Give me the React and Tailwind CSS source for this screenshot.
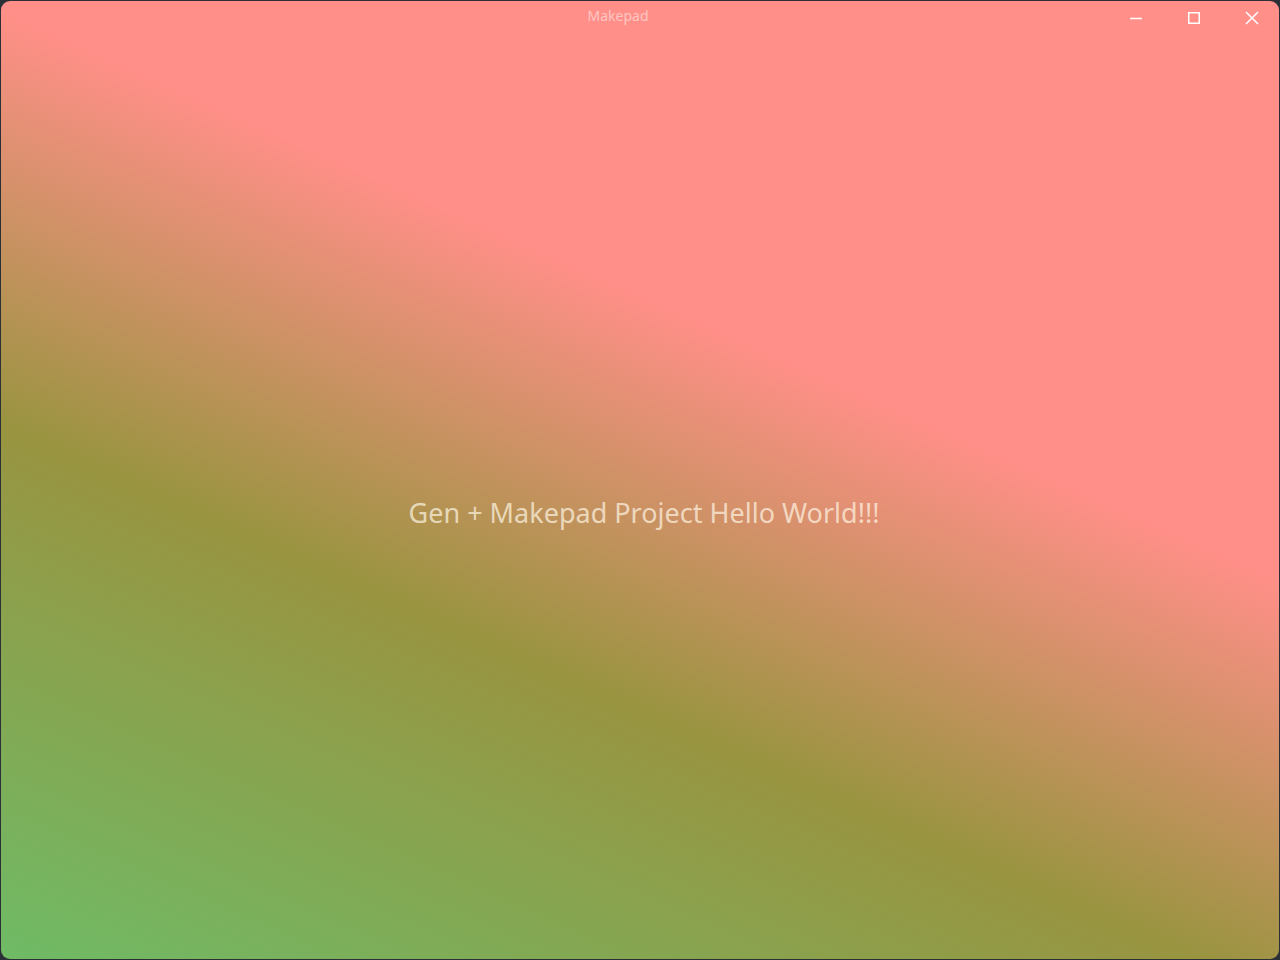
import React from 'react';

const WindowButton = ({ children }) => (
    <div className="w-[58px] h-[34px] flex items-center justify-center">
        <svg width="14" height="14" viewBox="0 0 14 14" fill="none" stroke="white" strokeWidth="1.5">
            {children}
        </svg>
    </div>
);

const App = () => {
    return (
        <div className="w-[1280px] h-[960px] bg-[#2b2f36] p-px" style={{ fontFamily: '"Noto Sans", "Open Sans", sans-serif' }}>
            <div className="w-full h-full rounded-[9px] overflow-hidden flex flex-col bg-[linear-gradient(24deg,#6fbb66_0%,#999440_35%,#ff8f88_62%,#ff8f88_100%)]">
                {/* Title bar */}
                <div className="h-9 flex items-start">
                    <div className="flex-1 pl-[128px] pt-[4px] text-center text-[14px] text-white/50">Makepad</div>
                    <div className="flex -mr-[2px]">
                        <WindowButton>
                            <path d="M1 7.5 H13" />
                        </WindowButton>
                        <WindowButton>
                            <rect x="1.75" y="1.75" width="10.5" height="10.5" />
                        </WindowButton>
                        <WindowButton>
                            <path d="M1 1 L13 13 M13 1 L1 13" />
                        </WindowButton>
                    </div>
                </div>

                {/* Content */}
                <div className="flex-1 flex items-center justify-center pt-[30px] pl-2">
                    <p className="text-[27px] text-[#fff8e6]/70">Gen + Makepad Project Hello World!!!</p>
                </div>
            </div>
        </div>
    );
};

export default App;
